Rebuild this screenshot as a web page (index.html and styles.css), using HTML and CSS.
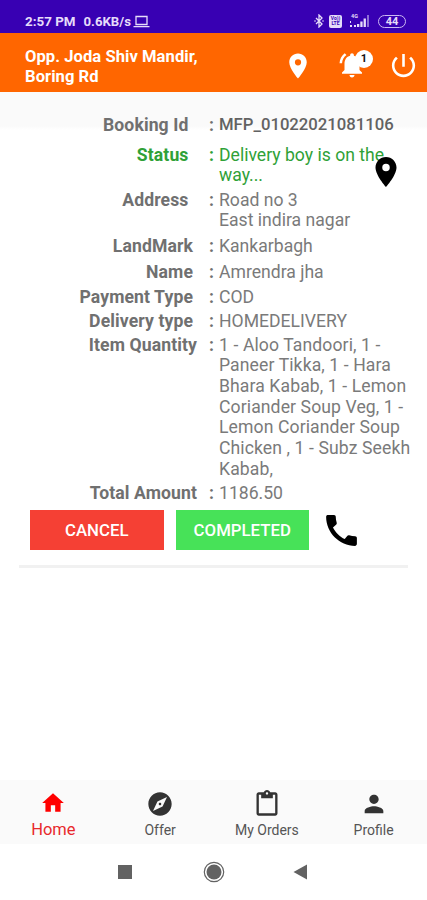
FILE: index.html
```html
<!DOCTYPE html>
<html lang="en">
<head>
<meta charset="utf-8">
<title>Booking</title>
<link rel="stylesheet" href="styles.css">
</head>
<body>
<div class="statusbar">
  <span class="clock">2:57 PM</span><span class="speed">0.6KB/s</span>
  <svg class="laptop" viewBox="0 0 17 13"><path d="M3 1.5h11v8H3zM.5 11.7h16" fill="none" stroke="currentColor" stroke-width="1.3"/></svg>
  <svg class="bt" viewBox="0 0 10 14"><path d="M2 4l6 6-3 3V1l3 3-6 6" fill="none" stroke="currentColor" stroke-width="1.3"/><circle cx="1" cy="7" r=".8" fill="currentColor"/><circle cx="9" cy="7" r=".8" fill="currentColor"/></svg>
  <span class="volte"><span>Vo))</span><span>LTE</span></span>
  <span class="signal"><span class="net">4G</span><svg viewBox="0 0 20 12"><path d="M0 10h2v2H0zM0 6h1v2H0zM4 10h2v2H4zM7 9h2.300v3H7zM10.300 6.500h2.300V12h-2.300zM13.600 3.500h2.300V12h-2.300z" fill="currentColor"/><path d="M17 0h2v12h-2z" fill="currentColor" opacity=".5"/></svg></span>
  <span class="battery">44</span>
</div>
<header class="appbar">
  <div class="location">Opp. Joda Shiv Mandir,<br>Boring Rd</div>
  <svg class="pin" viewBox="0 0 24 24"><path fill="currentColor" d="M12 2C8.130 2 5 5.130 5 9c0 5.250 7 13 7 13s7-7.750 7-13c0-3.870-3.130-7-7-7zm0 9.500a2.500 2.500 0 0 1 0-5 2.500 2.500 0 0 1 0 5z"/></svg>
  <div class="alerts">
    <svg viewBox="0 0 24 24"><path fill="currentColor" d="M7.580 4.080L6.150 2.650C3.750 4.480 2.170 7.300 2.030 10.500h2c.15-2.650 1.510-4.970 3.550-6.420zM18 11c0-3.070-1.640-5.640-4.500-6.320V4c0-.83-.67-1.500-1.500-1.500s-1.500.67-1.500 1.500v.68C7.630 5.360 6 7.920 6 11v5l-2 2v1h16v-1l-2-2v-5zm-6 11c1.100 0 2-.9 2-2h-4c0 1.100.9 2 2 2z"/></svg>
    <span class="badge">1</span>
  </div>
  <svg class="power" viewBox="0 0 24 24"><path fill="currentColor" d="M13 3h-2v10h2V3zm4.830 2.170l-1.420 1.420C17.990 7.860 19 9.810 19 12c0 3.870-3.130 7-7 7s-7-3.130-7-7c0-2.190 1.010-4.140 2.580-5.420L6.170 5.170C4.230 6.820 3 9.260 3 12c0 4.970 4.030 9 9 9s9-4.030 9-9c0-2.740-1.230-5.180-3.170-6.830z"/></svg>
</header>
<main>
  <dl class="booking">
    <div class="row booking-id"><dt>Booking Id</dt><i>:</i><dd>MFP_01022021081106</dd></div>
    <div class="row status"><dt>Status</dt><i>:</i><dd>Delivery boy is on the<br>way...</dd>
      <svg class="map-pin" viewBox="0 0 24 24"><circle cx="12" cy="9" r="3" fill="#fff"/><path fill="#000" d="M12 2C8.130 2 5 5.130 5 9c0 5.250 7 13 7 13s7-7.750 7-13c0-3.870-3.130-7-7-7zm0 9.500a2.500 2.500 0 0 1 0-5 2.500 2.500 0 0 1 0 5z"/></svg></div>
    <div class="row address"><dt>Address</dt><i>:</i><dd>Road no 3<br>East indira nagar</dd></div>
    <div class="row mid landmark"><dt>LandMark</dt><i>:</i><dd>Kankarbagh</dd></div>
    <div class="row mid name"><dt>Name</dt><i>:</i><dd>Amrendra jha</dd></div>
    <div class="row mid payment"><dt>Payment Type</dt><i>:</i><dd>COD</dd></div>
    <div class="row mid delivery"><dt>Delivery type</dt><i>:</i><dd>HOMEDELIVERY</dd></div>
    <div class="row wide items"><dt>Item Quantity</dt><i>:</i><dd>1 - Aloo Tandoori, 1 -<br>Paneer Tikka, 1 - Hara<br>Bhara Kabab, 1 - Lemon<br>Coriander Soup Veg, 1 -<br>Lemon Coriander Soup<br>Chicken , 1 - Subz Seekh<br>Kabab,</dd></div>
    <div class="row wide total"><dt>Total Amount</dt><i>:</i><dd>1186.50</dd></div>
  </dl>
  <div class="actions">
    <button class="cancel">CANCEL</button>
    <button class="completed">COMPLETED</button>
    <svg class="call" viewBox="0 0 24 24"><path d="M20.010 15.380c-1.230 0-2.420-.2-3.530-.56a.977.977 0 0 0-1.010.24l-1.570 1.970c-2.830-1.350-5.480-3.900-6.890-6.830l1.950-1.660c.27-.28.35-.67.24-1.020-.37-1.110-.56-2.300-.56-3.530 0-.54-.45-.99-.99-.99H4.190C3.650 3 3 3.240 3 3.990 3 13.280 10.730 21 20.010 21c.71 0 .99-.63.99-1.180v-3.450c0-.54-.45-.99-.99-.99z"/></svg>
  </div>
  <hr>
</main>
<nav class="tabs">
  <a class="tab active"><svg viewBox="0 0 24 24"><path fill="currentColor" d="M10 20v-6h4v6h5v-8h3L12 3 2 12h3v8z"/></svg><span>Home</span></a>
  <a class="tab"><svg viewBox="0 0 24 24"><path fill="currentColor" d="M12 10.900c-.61 0-1.100.49-1.100 1.100s.49 1.100 1.100 1.100c.61 0 1.100-.49 1.100-1.100s-.49-1.100-1.100-1.100zM12 2C6.480 2 2 6.480 2 12s4.480 10 10 10 10-4.480 10-10S17.520 2 12 2zm2.190 12.190L6 18l3.810-8.190L18 6l-3.810 8.190z"/></svg><span>Offer</span></a>
  <a class="tab orders"><svg viewBox="0 0 24 24"><path fill="currentColor" d="M19 2h-4.180C14.400.84 13.300 0 12 0c-1.300 0-2.400.84-2.820 2H5c-1.100 0-2 .9-2 2v16c0 1.100.9 2 2 2h14c1.100 0 2-.9 2-2V4c0-1.100-.9-2-2-2zm-7 0c.55 0 1 .45 1 1s-.45 1-1 1-1-.45-1-1 .45-1 1-1zm7 18H5V4h2v3h10V4h2v16z"/></svg><span>My Orders</span></a>
  <a class="tab profile"><svg viewBox="0 0 24 24"><path fill="currentColor" d="M12 12c2.210 0 4-1.790 4-4s-1.790-4-4-4-4 1.790-4 4 1.790 4 4 4zm0 2c-2.670 0-8 1.340-8 4v2h16v-2c0-2.660-5.330-4-8-4z"/></svg><span>Profile</span></a>
</nav>
<div class="sysnav">
  <svg viewBox="0 0 24 24"><path d="M5 5h14v14H5z" fill="#626262"/></svg>
  <svg viewBox="0 0 24 24"><circle cx="12" cy="12" r="9.700" fill="none" stroke="#626262" stroke-width="1.200"/><circle cx="12" cy="12" r="7.500" fill="#626262"/></svg>
  <svg viewBox="0 0 24 24"><path d="M17 4.500v15L3.500 12z" fill="#626262"/></svg>
</div>
</body>
</html>
```

FILE: styles.css
```css
* { box-sizing: border-box; }
body {
  margin: 0;
  width: 427px;
  height: 900px;
  overflow: hidden;
  display: flex;
  flex-direction: column;
  background: #fff;
  font-family: Roboto, "Liberation Sans", sans-serif;
}
svg { display: block; flex: none; }

.statusbar {
  height: 33px;
  flex: none;
  display: flex;
  align-items: center;
  padding: 9px 21px 0 25px;
  background: #3800b3;
  color: #e6dcfa;
  font-size: 13.4px;
  font-weight: 700;
}
.speed { margin-left: 8px; font-size: 13.2px; }
.laptop { width: 17px; height: 13px; margin: 0 auto 0 2px; }
.bt { width: 10px; height: 14px; }
.volte {
  display: flex;
  flex-direction: column;
  align-items: center;
  width: 13px;
  height: 13px;
  margin-left: 5px;
  padding-top: 1px;
  border-radius: 2px;
  background: #e6dcfa;
  color: #3800b3;
  font-size: 5px;
  line-height: 5.5px;
}
.signal { width: 20px; margin-left: 8px; position: relative; }
.signal svg { width: 20px; height: 12px; }
.net { position: absolute; left: 1px; top: -2px; font-size: 5.5px; line-height: 6px; }
.battery {
  width: 28px;
  height: 13px;
  margin-left: 8px;
  border: 1.5px solid #cbb8f2;
  border-radius: 7px;
  font-size: 11px;
  line-height: 11px;
  text-align: center;
}

.appbar {
  height: 59px;
  flex: none;
  display: flex;
  align-items: center;
  padding: 0 8px 0 25px;
  background: #ff6600;
  color: #fff;
}
.location {
  flex: 1;
  padding-top: 8px;
  font-size: 16.6px;
  line-height: 19.3px;
  font-weight: 700;
  letter-spacing: 0.04px;
  white-space: nowrap;
}
.pin { width: 30px; height: 30px; margin-top: 6px; }
.alerts { position: relative; margin: 5px 0 0 24px; }
.alerts svg { width: 30px; height: 30px; }
.badge {
  position: absolute;
  left: 18px;
  top: 0;
  width: 18px;
  height: 18px;
  border-radius: 50%;
  background: #fff;
  color: #111;
  font-size: 11px;
  line-height: 18px;
  font-weight: 700;
  text-align: center;
}
.power { width: 31px; height: 31px; margin: 5px 0 0 21px; }

main { flex: 1; background: linear-gradient(#fafafa 34px, #fff 38px); }
.booking { margin: 0; padding-top: 23.4px; }
.row {
  position: relative;
  display: grid;
  grid-template-columns: 188.5px 20.5px 5px 1fr;
  color: #7a7a7a;
  font-size: 17.6px;
  line-height: 20.7px;
  white-space: nowrap;
}
.row dt { grid-column: 1; text-align: right; font-weight: 700; color: #707070; letter-spacing: 0.1px; }
.row i { grid-column: 3; font-style: normal; font-weight: 700; color: #707070; }
.row dd { grid-column: 4; margin: 0 0 0 5px; }
.row.mid { grid-template-columns: 193px 16px 5px 1fr; }
.row.wide { grid-template-columns: 197px 12px 5px 1fr; }
.booking-id dd { font-size: 16.7px; font-weight: 500; color: #626262; }
.status { margin-top: 8.5px; }
.row.status, .row.status dt, .row.status i { color: #2fa137; }
.map-pin { position: absolute; left: 368px; top: 9px; width: 36px; height: 36px; }
.address { margin-top: 3.6px; }
.landmark { margin-top: 4.8px; }
.name { margin-top: 5.3px; }
.payment { margin-top: 4px; }
.delivery { margin-top: 3.5px; }
.items { margin-top: 3.1px; }
.items dd { letter-spacing: 0.1px; }
.total { margin-top: 3.5px; }

.actions { display: flex; margin: 6.8px 0 0 30px; height: 40px; }
.actions button {
  width: 133.5px;
  height: 40px;
  margin-right: 12px;
  padding: 0;
  border: 0;
  font: 500 16.8px/41px Roboto, sans-serif;
  color: #fff;
}
.actions .cancel { background: #f54034; }
.actions .completed { background: #47e258; }
.call { width: 41px; height: 41px; }
hr { height: 3px; margin: 14.5px 19px 0; border: 0; background: #f1f1f1; }

.tabs {
  flex: none;
  height: 64px;
  display: grid;
  grid-template-columns: repeat(4, 106.75px);
  background: #fafafa;
  color: #333;
}
.tab {
  display: flex;
  flex-direction: column;
  align-items: center;
  padding-top: 10px;
  font-size: 14px;
}
.tab svg { width: 28px; height: 28px; }
.tab span { line-height: 18px; margin-top: 3px; color: #555; }
.active svg { width: 26px; height: 26px; color: #f00; }
.tab.active span { font-size: 16.5px; margin-top: 5px; color: #e8292c; }
.sysnav {
  flex: none;
  height: 56px;
  display: flex;
  justify-content: center;
  align-items: center;
  gap: 64.5px;
}
.sysnav svg { width: 24px; height: 24px; }
```
